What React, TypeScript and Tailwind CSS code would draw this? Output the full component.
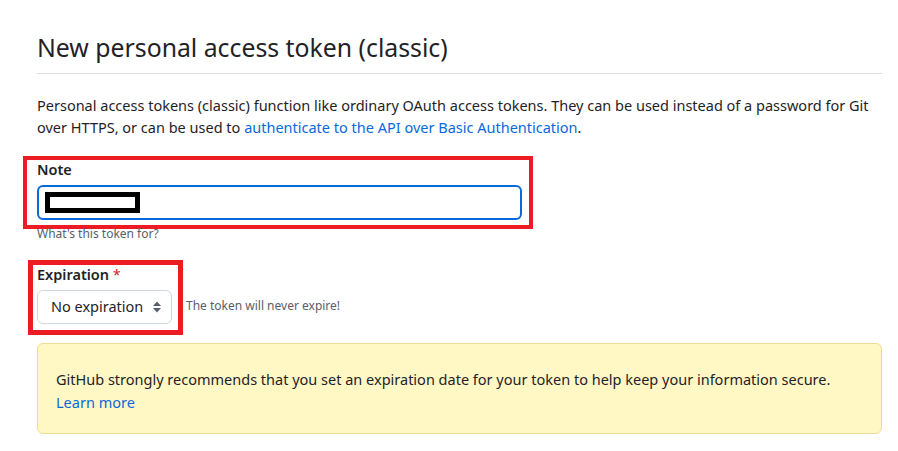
function SelectArrows() {
  return (
    <svg width="10" height="14" viewBox="0 0 10 14" className="text-[#57606a]">
      <path d="M5 1.5 L9 6 H1 Z" fill="currentColor" />
      <path d="M5 12.5 L9 8 H1 Z" fill="currentColor" />
    </svg>
  );
}

export default function App() {
  return (
    <div className="min-h-[451px] w-[898px] bg-white text-[#1f2328] font-['Noto_Sans',sans-serif]">
      <div className="ml-[37px] w-[845px] pt-[30px]">
        {/* Heading */}
        <h2 className="text-[24.8px] leading-[34px] font-normal pb-[9px] border-b border-[#d8dee4]">
          New personal access token (classic)
        </h2>

        <p className="mt-[20px] text-[14.5px] leading-[22px]">
          Personal access tokens (classic) function like ordinary OAuth access tokens. They can be used instead of a password for Git
          over HTTPS, or can be used to{' '}
          <a href="#" className="text-[#0969da]">authenticate to the API over Basic Authentication</a>.
        </p>

        {/* Note field, outlined in red */}
        <div className="-ml-[14px] mt-[18px] w-[510px] border-[4px] border-[#ed1c24] pl-[10px] pr-[7px] pt-[1px] pb-[5px]">
          <label className="block text-[14.5px] font-semibold leading-[16px]">Note</label>
          <div className="mt-[8px] h-[35px] rounded-[6px] border-2 border-[#0969da] flex items-center pl-[6px]">
            <div className="w-[95px] h-[21px] border-[5px] border-black bg-white" />
          </div>
        </div>
        <p className="-mt-[4px] text-[12px] leading-[18px] text-[#57606a]">What's this token for?</p>

        {/* Expiration */}
        <div className="flex items-end mt-[17px]">
          <div className="-ml-[9px] w-[155px] border-[5px] border-[#ed1c24] pl-[4px] pb-[6px]">
            <label className="block text-[14.5px] font-semibold leading-[18px]">
              Expiration <span className="text-[#cf222e] font-normal">*</span>
            </label>
            <div className="mt-[7px] w-[135px] h-[34px] rounded-[6px] border border-[#d0d7de] bg-white flex items-center justify-between pl-[13px] pr-[9px] text-[14.5px]">
              <span>No expiration</span>
              <SelectArrows />
            </div>
          </div>
          <span className="ml-[3px] mb-[21px] text-[12px] leading-[16px] text-[#57606a]">The token will never expire!</span>
        </div>

        {/* Warning flash */}
        <div className="mt-[8px] h-[91px] rounded-[6px] border border-[#eedb95] bg-[#fff8c5] pl-[18px] pt-[24px] text-[14.5px] leading-[23px]">
          GitHub strongly recommends that you set an expiration date for your token to help keep your information secure.
          <br />
          <a href="#" className="text-[#0969da]">Learn more</a>
        </div>
      </div>
    </div>
  );
}
